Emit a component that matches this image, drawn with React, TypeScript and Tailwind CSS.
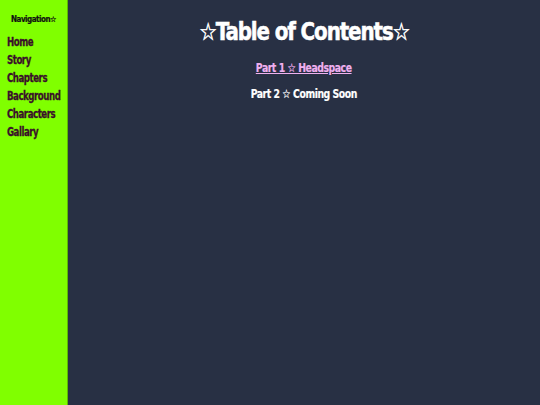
import React from "react";

const font = { fontFamily: "'DejaVu Sans Condensed', 'DejaVu Sans', sans-serif", fontStretch: "condensed" as const };

export default function App() {
  const links = ["Home", "Story", "Chapters", "Background", "Characters", "Gallary"];
  return (
    <div className="flex h-[405px] w-[540px] bg-[#283044] font-bold" style={font}>
      <div className="w-[68px] shrink-0 bg-[#80ff00] border-r border-r-[#5fb800] pt-[15px]">
        <div className="text-center text-[8px] text-[#111] leading-[10px] tracking-[-0.5px] [-webkit-text-stroke:0.2px_#111]">Navigation☆</div>
        <div className="mt-[8px] flex flex-col pl-[7px]">
          {links.map((l) => (
            <a key={l} className="text-[12px] leading-[18px] text-[#3a0f2a] tracking-[-0.6px] origin-left scale-x-[0.8] [-webkit-text-stroke:0.3px_#3a0f2a]">{l}</a>
          ))}
        </div>
      </div>
      <div className="flex-1 flex flex-col items-center pt-[16px]">
        <h1 className="text-[24px] leading-[32px] text-white tracking-[-1.2px] scale-x-[0.92] [-webkit-text-stroke:0.5px_white]">☆Table of Contents☆</h1>
        <a className="mt-[12px] text-[12px] leading-[16px] text-[#f0b0f0] underline tracking-[-0.5px] scale-x-[0.86] [-webkit-text-stroke:0.2px_#f0b0f0]">Part 1 ☆ Headspace</a>
        <div className="mt-[10px] text-[12px] leading-[16px] text-white tracking-[-0.5px] scale-x-[0.86] [-webkit-text-stroke:0.2px_white]">Part 2 ☆ Coming Soon</div>
      </div>
    </div>
  );
}
